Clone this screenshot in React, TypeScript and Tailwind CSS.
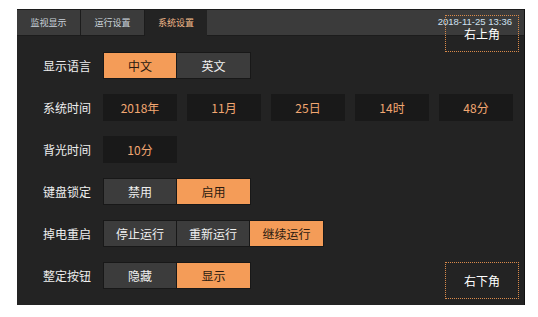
import React from "react";

const font = { fontFamily: '"Noto Sans CJK SC", "Noto Sans", sans-serif' };

function Seg({ items, active }: { items: string[]; active: number }) {
  return (
    <div className="flex border border-[#181818] divide-x divide-[#181818]">
      {items.map((t, i) => (
        <div
          key={t}
          className={
            "w-[73px] h-[25px] flex items-center justify-center text-[12px] " +
            (i === active ? "bg-[#f49c58] text-[#2a1a10]" : "bg-[#3c3c3c] text-[#f0f0f0]")
          }
        >
          {t}
        </div>
      ))}
    </div>
  );
}

function Box({ t }: { t: string }) {
  return (
    <div className="w-[74px] h-[27px] bg-[#191919] flex items-center justify-center text-[12px] text-[#f2a772]">
      {t}
    </div>
  );
}

function Row({ label, children }: { label: string; children: React.ReactNode }) {
  return (
    <div className="flex items-center h-[27px]">
      <div className="w-[60px] text-[12px] text-[#eeeeee] leading-none">{label}</div>
      {children}
    </div>
  );
}

export default function App() {
  return (
    <div className="w-[538px] h-[317px] bg-white pt-[9px] pl-[17px]" style={font}>
      <div className="relative w-[508px] h-[296px] bg-[#232323] border-r border-[#111]">
        <div className="flex h-[27px] bg-[#3b3b3b] border-t border-b border-[#1c1c1c]">
          <div className="w-[64px] flex items-center justify-center text-[9px] text-[#c9d2da] border-r border-[#1c1c1c]">
            监视显示
          </div>
          <div className="w-[64px] flex items-center justify-center text-[9px] text-[#c9d2da] border-r border-[#1c1c1c]">
            运行设置
          </div>
          <div className="w-[62px] -mb-px flex items-center justify-center text-[9px] text-[#f2b98a] bg-[#232323]">
            系统设置
          </div>
          <div className="flex-1 flex items-center justify-end pr-[12px] text-[9.5px] text-[#cfe0f0]" style={{ fontFamily: '"Liberation Sans", sans-serif' }}>
            2018-11-25 13:36
          </div>
        </div>

        <div className="flex flex-col gap-[15px] pl-[26px] pt-[16px]">
          <Row label="显示语言">
            <Seg items={["中文", "英文"]} active={0} />
          </Row>
          <Row label="系统时间">
            <div className="flex gap-[10px]">
              <Box t="2018年" />
              <Box t="11月" />
              <Box t="25日" />
              <Box t="14时" />
              <Box t="48分" />
            </div>
          </Row>
          <Row label="背光时间">
            <Box t="10分" />
          </Row>
          <Row label="键盘锁定">
            <Seg items={["禁用", "启用"]} active={1} />
          </Row>
          <Row label="掉电重启">
            <Seg items={["停止运行", "重新运行", "继续运行"]} active={2} />
          </Row>
          <Row label="整定按钮">
            <Seg items={["隐藏", "显示"]} active={1} />
          </Row>
        </div>

        <div className="absolute left-[428px] top-[6px] w-[74px] h-[37px] border border-dotted border-[#d98a4a] flex items-center justify-center pt-[1px] text-[12px] text-white">
          右上角
        </div>
        <div className="absolute left-[428px] top-[253px] w-[74px] h-[37px] border border-dotted border-[#d98a4a] flex items-center justify-center text-[12px] text-white">
          右下角
        </div>
      </div>
    </div>
  );
}
